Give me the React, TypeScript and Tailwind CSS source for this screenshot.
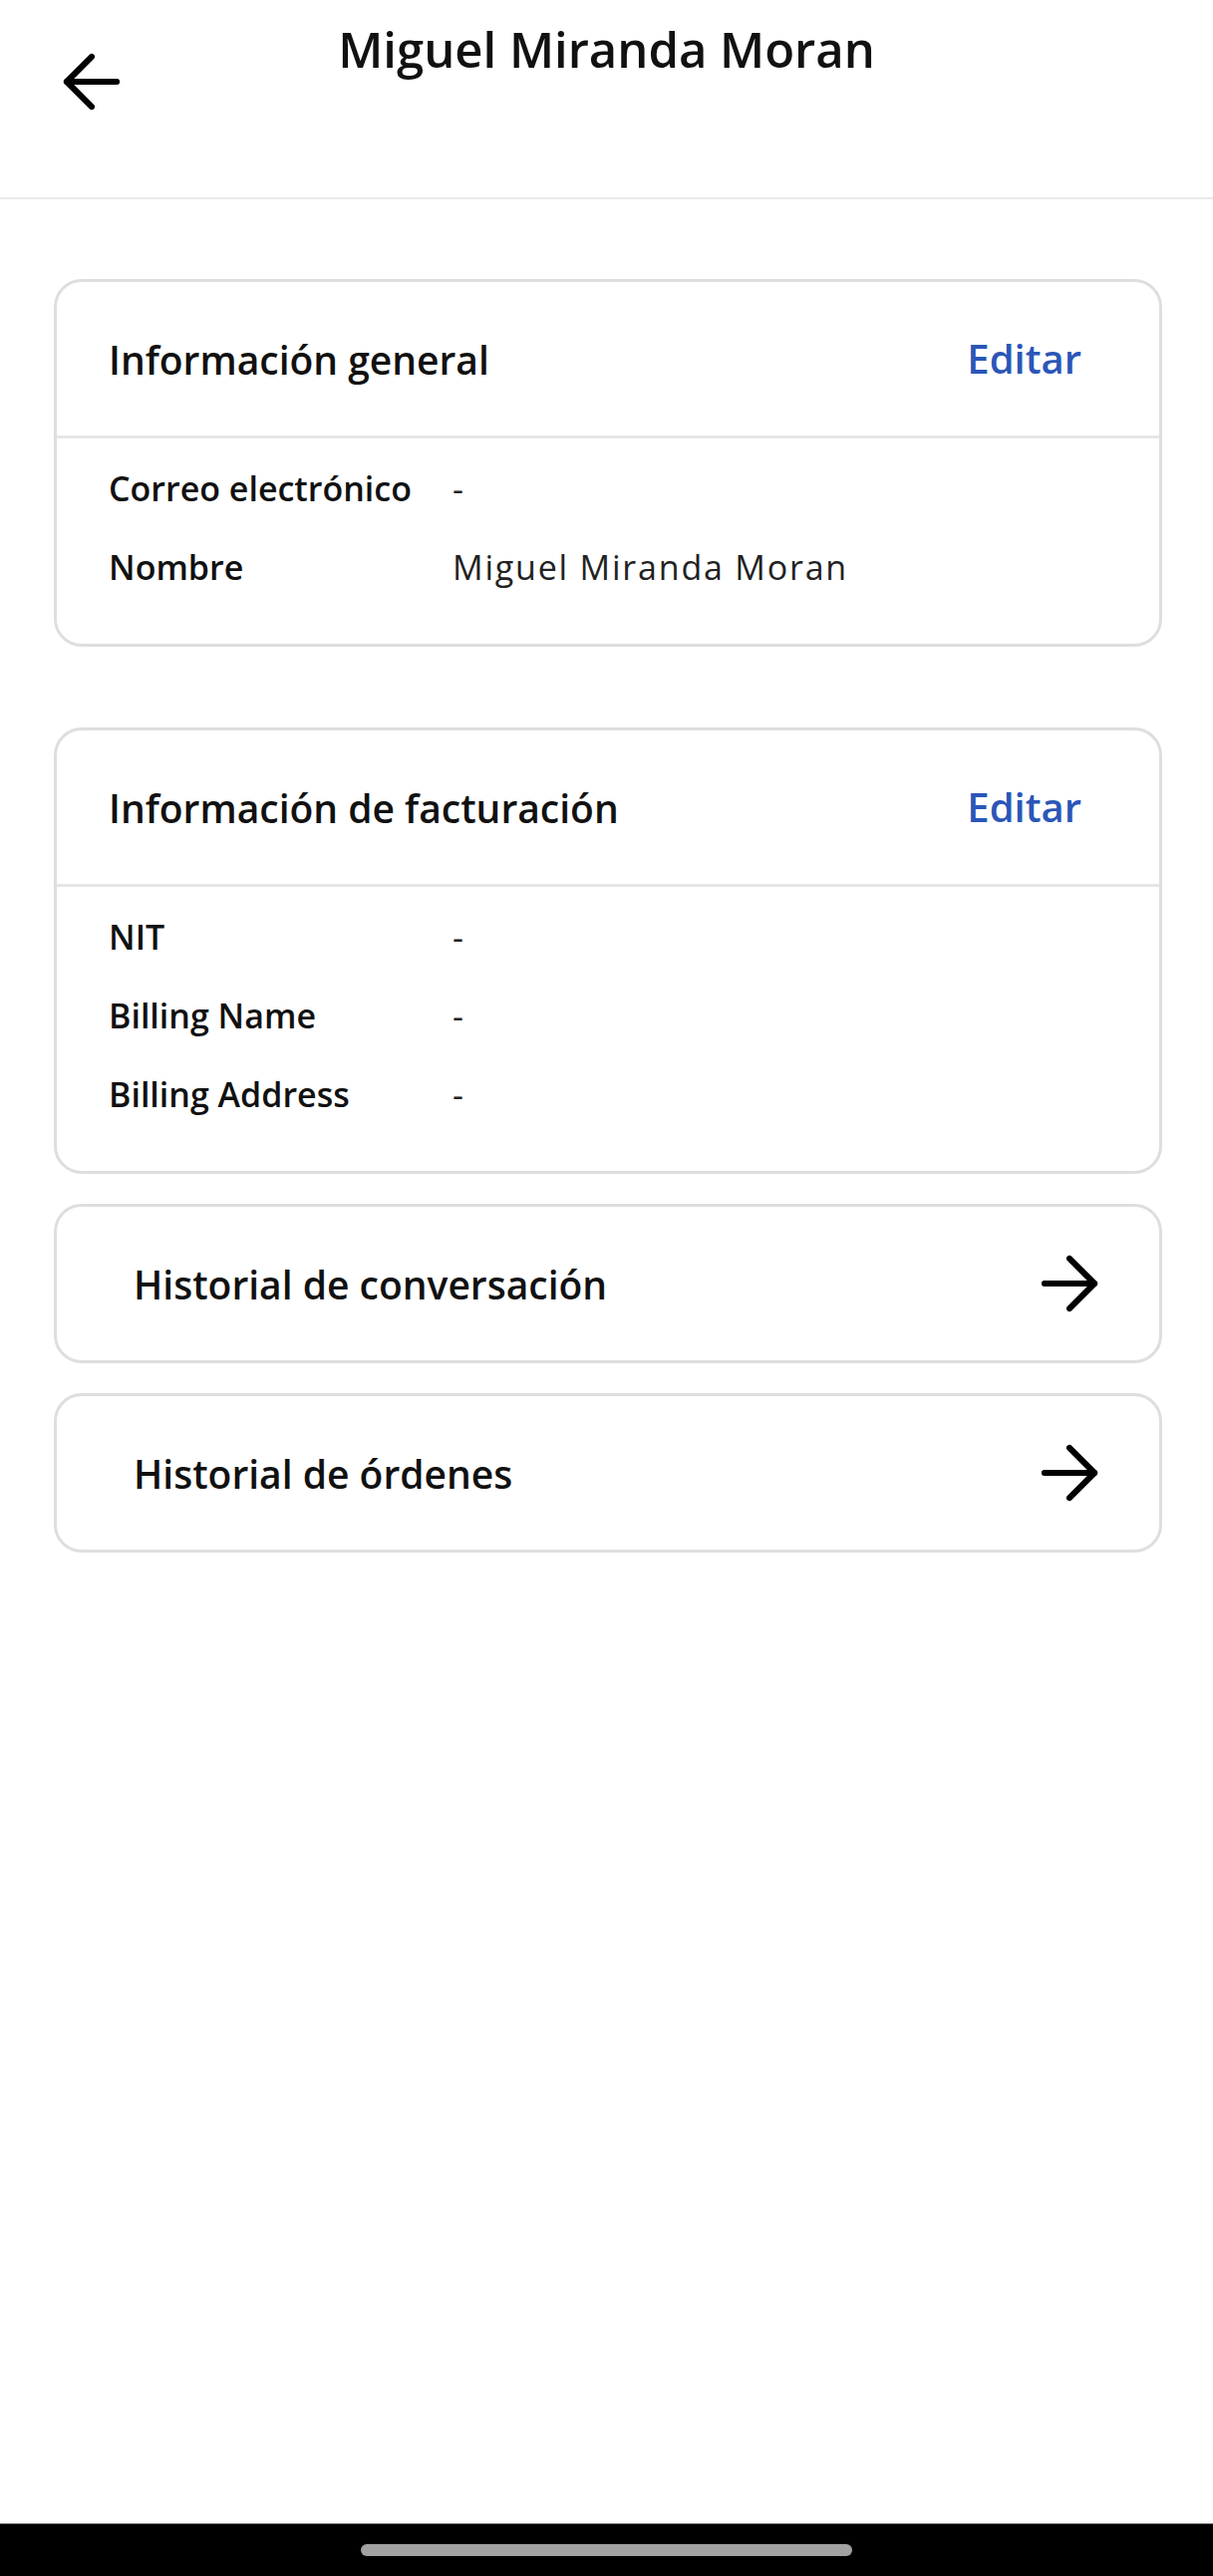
import { ArrowLeft, ArrowRight } from "lucide-react";

const font = { fontFamily: '"Open Sans", "Noto Sans", sans-serif' };

type Row = { label: string; value: string };

const general: Row[] = [
  { label: "Correo electrónico", value: "-" },
  { label: "Nombre", value: "Miguel Miranda Moran" },
];

const billing: Row[] = [
  { label: "NIT", value: "-" },
  { label: "Billing Name", value: "-" },
  { label: "Billing Address", value: "-" },
];

function InfoCard({ title, rows }: { title: string; rows: Row[] }) {
  return (
    <div className="rounded-[28px] border-[3px] border-[#dedede] bg-white">
      <div className="flex h-[154px] items-center justify-between pl-[52px] pr-[78px]">
        <h2 className="text-[39px] font-semibold leading-none text-[#111]">
          {title}
        </h2>
        <button className="text-[40px] font-semibold leading-none text-[#2b56b8]">
          Editar
        </button>
      </div>
      <div className="h-[3px] bg-[#e6e6e6]" />
      <div className="flex flex-col gap-[31px] pl-[52px] pt-[26px] pb-[53px]">
        {rows.map((r) => (
          <div key={r.label} className="flex text-[34px] leading-[48px]">
            <span className="w-[345px] shrink-0 font-semibold text-[#111]">
              {r.label}
            </span>
            <span className="tracking-[1.8px] text-[#222]">{r.value}</span>
          </div>
        ))}
      </div>
    </div>
  );
}

function LinkCard({ label }: { label: string }) {
  return (
    <div className="flex h-[160px] items-center justify-between rounded-[28px] border-[3px] border-[#dedede] bg-white pl-[77px] pr-[47px]">
      <span className="text-[39px] font-semibold leading-none text-[#111]">
        {label}
      </span>
      <ArrowRight size={86} strokeWidth={1.7} className="text-black" />
    </div>
  );
}

export default function App() {
  return (
    <div className="flex min-h-[2585px] flex-col bg-white" style={font}>
      {/* Top bar */}
      <header className="flex h-[200px] shrink-0 items-start border-b-2 border-[#e8e8e8] pl-[49px]">
        <button className="mt-[39px] shrink-0">
          <ArrowLeft size={86} strokeWidth={1.7} className="text-black" />
        </button>
        <h1 className="mt-[25px] flex-1 text-center text-[49px] font-semibold leading-none text-[#111]">
          Miguel Miranda Moran
        </h1>
        <div className="w-[135px] shrink-0" />
      </header>

      <main className="flex-1 pl-[54px] pr-[51px] pt-[80px]">
        <InfoCard title="Información general" rows={general} />
        <div className="mt-[81px]">
          <InfoCard title="Información de facturación" rows={billing} />
        </div>
        <div className="mt-[30px] flex flex-col gap-[30px]">
          <LinkCard label="Historial de conversación" />
          <LinkCard label="Historial de órdenes" />
        </div>
      </main>

      {/* Android nav bar */}
      <div className="flex h-[53px] shrink-0 items-start justify-center border-t border-[#777] bg-black pt-[20px]">
        <div className="h-[12px] w-[493px] rounded-full bg-[#a2a2a2]" />
      </div>
    </div>
  );
}
